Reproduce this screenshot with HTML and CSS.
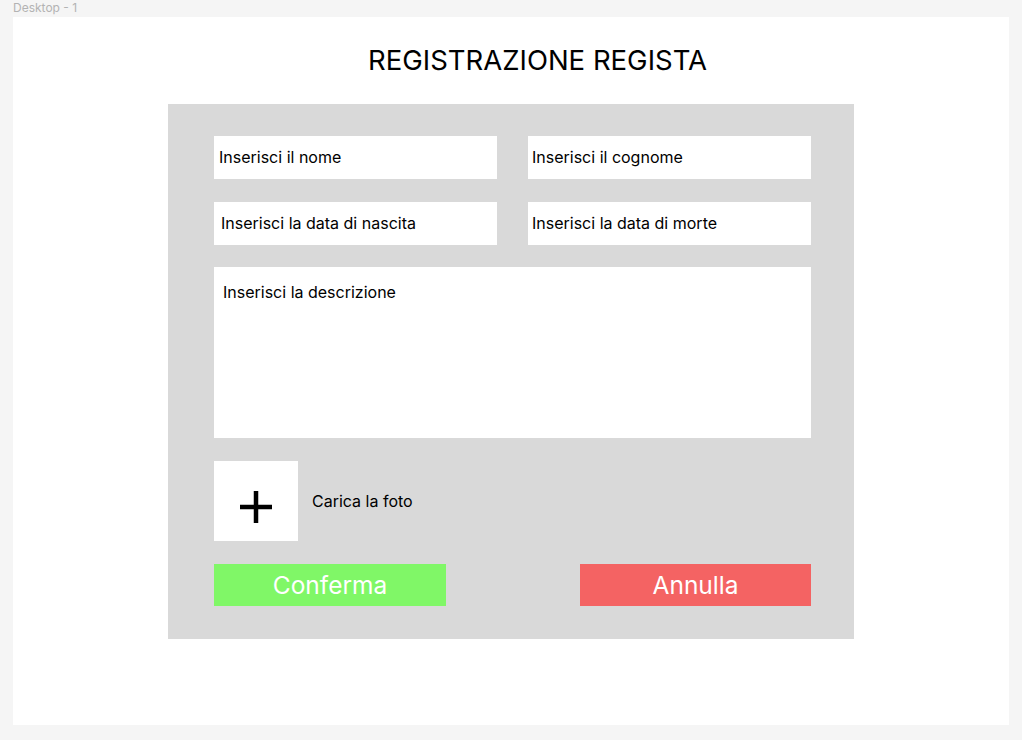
FILE: index.html
```html
<!DOCTYPE html>
<html lang="it">
<head>
<meta charset="utf-8">
<title>Registrazione Regista</title>
<link rel="stylesheet" href="styles.css">
</head>
<body>
<div class="canvas-label">Desktop - 1</div>
<div class="frame">
  <h1 class="title">REGISTRAZIONE REGISTA</h1>
  <form class="panel">
    <div class="row">
      <div class="field pad-a">Inserisci il nome</div>
      <div class="field pad-b">Inserisci il cognome</div>
    </div>
    <div class="row">
      <div class="field pad-c">Inserisci la data di nascita</div>
      <div class="field pad-b">Inserisci la data di morte</div>
    </div>
    <div class="textarea">Inserisci la descrizione</div>
    <div class="photo-row">
      <div class="photo-box">
        <svg width="32" height="32" viewBox="0 0 32 32"><path d="M16 0V32M0 16H32" stroke="#000" stroke-width="4.5"/></svg>
      </div>
      <span class="photo-label">Carica la foto</span>
    </div>
    <div class="buttons">
      <button type="button" class="btn btn-ok">Conferma</button>
      <button type="button" class="btn btn-cancel">Annulla</button>
    </div>
  </form>
</div>
</body>
</html>
```
FILE: styles.css
```css
* { box-sizing: border-box; }
html, body { margin: 0; padding: 0; }
body {
  background: #f5f5f5;
  font-family: Inter, "Noto Sans", sans-serif;
  width: 1022px;
  height: 740px;
  overflow: hidden;
}
.canvas-label {
  height: 17px;
  padding-left: 13px;
  font-size: 12px;
  line-height: 15px;
  color: #b3b3b3;
}
.frame {
  margin-left: 13px;
  width: 996px;
  height: 708px;
  background: #fff;
  display: flex;
  flex-direction: column;
}
.title {
  margin: 26px 0 0 355px;
  height: 61px;
  font-weight: 400;
  font-size: 27.5px;
  line-height: 34px;
  color: #000;
}
.panel {
  margin-left: 155px;
  width: 686px;
  height: 535px;
  background: #d9d9d9;
  padding: 32px 42px 0 46px;
  display: flex;
  flex-direction: column;
  gap: 23px;
}
.row {
  display: flex;
  gap: 31px;
}
.field {
  width: 283px;
  height: 43px;
  background: #fff;
  font-size: 16px;
  line-height: 43px;
  color: #000;
  white-space: nowrap;
}
.pad-a { padding-left: 5px; }
.pad-b { padding-left: 4px; }
.pad-c { padding-left: 7px; }
.textarea {
  height: 171px;
  margin-top: -1px;
  width: 597px;
  background: #fff;
  padding: 14px 9px;
  font-size: 16px;
  line-height: 22px;
  color: #000;
}
.photo-row {
  display: flex;
  align-items: center;
  gap: 14px;
}
.photo-box {
  width: 84px;
  height: 80px;
  background: #fff;
  display: flex;
  align-items: center;
  justify-content: center;
  padding-top: 12px;
}
.photo-label {
  font-size: 16px;
  color: #000;
}
.buttons {
  display: flex;
  justify-content: space-between;
  width: 597px;
}
.btn {
  width: 232px;
  height: 42px;
  border: 0;
  padding: 0;
  font-family: Inter, "Noto Sans", sans-serif;
  font-size: 24.5px;
  color: #fff;
}
.btn-cancel { width: 231px; }
.btn-ok { background: #80f767; }
.btn-cancel { background: #f46363; }
```
